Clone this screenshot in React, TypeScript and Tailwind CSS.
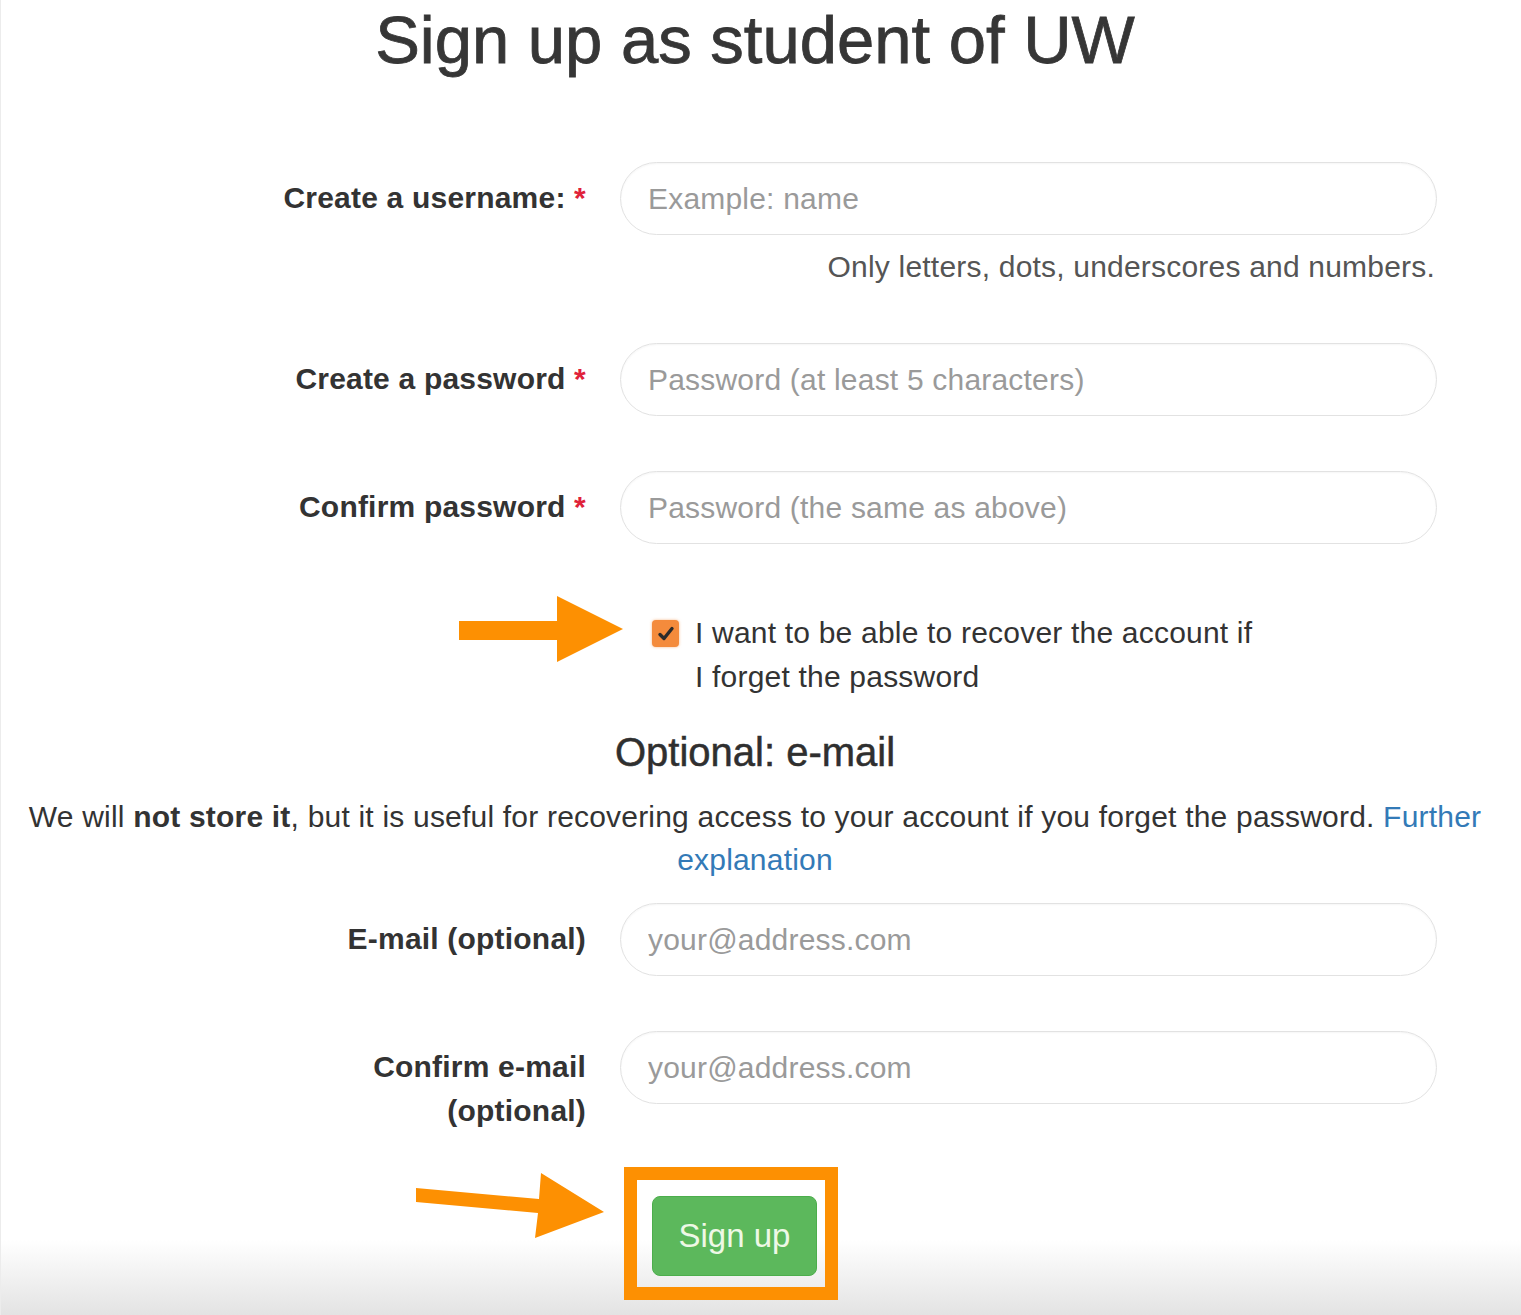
import React from 'react';

const font = { fontFamily: '"Liberation Sans", Arial, sans-serif' };

const Label: React.FC<{ text: string; required?: boolean; lines?: string[] }> = ({ text, required, lines }) => (
  <div className="w-[566px] shrink-0 pt-[14px] text-right text-[30px] font-bold leading-[44px] tracking-[0.2px] text-[#333]">
    {lines ? (
      lines.map((l) => <div key={l}>{l}</div>)
    ) : (
      <>
        {text}
        {required && <span className="text-[#e0223a]"> *</span>}
      </>
    )}
  </div>
);

const Field: React.FC<{ placeholder: string; type?: string }> = ({ placeholder, type = 'text' }) => (
  <input
    type={type}
    placeholder={placeholder}
    className="h-[73px] w-full rounded-full border border-[#e2e2e2] bg-white px-[27px] text-[30px] tracking-[0.2px] text-[#333] shadow-[inset_0_1px_2px_rgba(0,0,0,0.04)] outline-none placeholder:text-[#9a9a9a]"
  />
);

const Row: React.FC<{ label: React.ReactNode; children: React.ReactNode; className?: string }> = ({
  label,
  children,
  className = '',
}) => (
  <div className={`flex items-start ${className}`}>
    {label}
    <div className="ml-[34px] w-[817px]">{children}</div>
  </div>
);

const App: React.FC = () => {
  return (
    <div
      style={font}
      className="relative h-[1315px] w-full overflow-hidden border-l border-[#ececec] bg-[linear-gradient(to_bottom,#ffffff_1240px,#e3e3e3_1315px)]"
    >
      <div className="ml-[19px] w-[1470px]">
        <h1 className="mt-[6px] text-center text-[67px] font-normal leading-none text-[#363636] [-webkit-text-stroke:0.8px_#363636]">
          Sign up as student of UW
        </h1>

        <Row className="mt-[89px]" label={<Label text="Create a username:" required />}>
          <Field placeholder="Example: name" />
          <p className="mt-[14px] pr-[2px] text-right text-[30px] leading-[36px] tracking-[0.2px] text-[#555]">
            Only letters, dots, underscores and numbers.
          </p>
        </Row>

        <Row className="mt-[58px]" label={<Label text="Create a password" required />}>
          <Field type="password" placeholder="Password (at least 5 characters)" />
        </Row>

        <Row className="mt-[55px]" label={<Label text="Confirm password" required />}>
          <Field type="password" placeholder="Password (the same as above)" />
        </Row>

        <div className="mt-[67px] flex">
          <div className="w-[566px] shrink-0" />
          <div className="ml-[34px] flex w-[817px] items-start pl-[32px]">
            <span className="mt-[9px] flex h-[27px] w-[27px] shrink-0 items-center justify-center rounded-[4px] bg-[#f48b3c] shadow-[0_0_3px_rgba(244,139,60,0.6)]">
              <svg width="20" height="20" viewBox="0 0 20 20" fill="none">
                <path d="M4 10.5 L8 14.5 L16 4.5" stroke="#2b2b2b" strokeWidth="3.4" strokeLinecap="round" strokeLinejoin="round" />
              </svg>
            </span>
            <p className="ml-[16px] w-[568px] text-[30px] leading-[44px] tracking-[0.2px] text-[#333]">
              I want to be able to recover the account if I forget the password
            </p>
          </div>
        </div>

        <h3 className="mt-[29px] text-center text-[40px] font-normal leading-[48px] text-[#2f2f2f] [-webkit-text-stroke:0.5px_#2f2f2f]">
          Optional: e-mail
        </h3>

        <p className="mt-[19px] text-center text-[30px] leading-[43px] tracking-[0.2px] text-[#333]">
          We will <b className="font-bold">not store it</b>, but it is useful for recovering access to your account if you forget the password.{' '}
          <a href="#" className="text-[#337ab7]">
            Further explanation
          </a>
        </p>

        <Row className="mt-[22px]" label={<Label text="E-mail (optional)" />}>
          <Field type="email" placeholder="your@address.com" />
        </Row>

        <Row className="mt-[55px]" label={<Label text="" lines={['Confirm e-mail', '(optional)']} />}>
          <Field type="email" placeholder="your@address.com" />
        </Row>

        <div className="mt-[63px] flex">
          <div className="w-[566px] shrink-0" />
          <div className="ml-[34px] w-[817px] pl-[32px]">
            <div className="relative inline-block">
              <div className="absolute left-[-28px] top-[-29px] h-[133px] w-[214px] border-[13px] border-[#fd9002]" />
              <button className="h-[80px] w-[165px] rounded-[8px] border border-[#4cae4c] bg-[#5cb85c] text-[33px] text-[#eef8e6]">
                Sign up
              </button>
            </div>
          </div>
        </div>
      </div>

      <svg className="pointer-events-none absolute left-0 top-0" width="1521" height="1315">
        <polygon points="458,621 556,621 556,596 622,629 556,662 556,640 458,640" fill="#fd9002" />
        <polygon points="415,1188 538,1199 540,1173 603,1212 534,1238 537,1213 415,1202" fill="#fd9002" />
      </svg>
    </div>
  );
};

export default App;
